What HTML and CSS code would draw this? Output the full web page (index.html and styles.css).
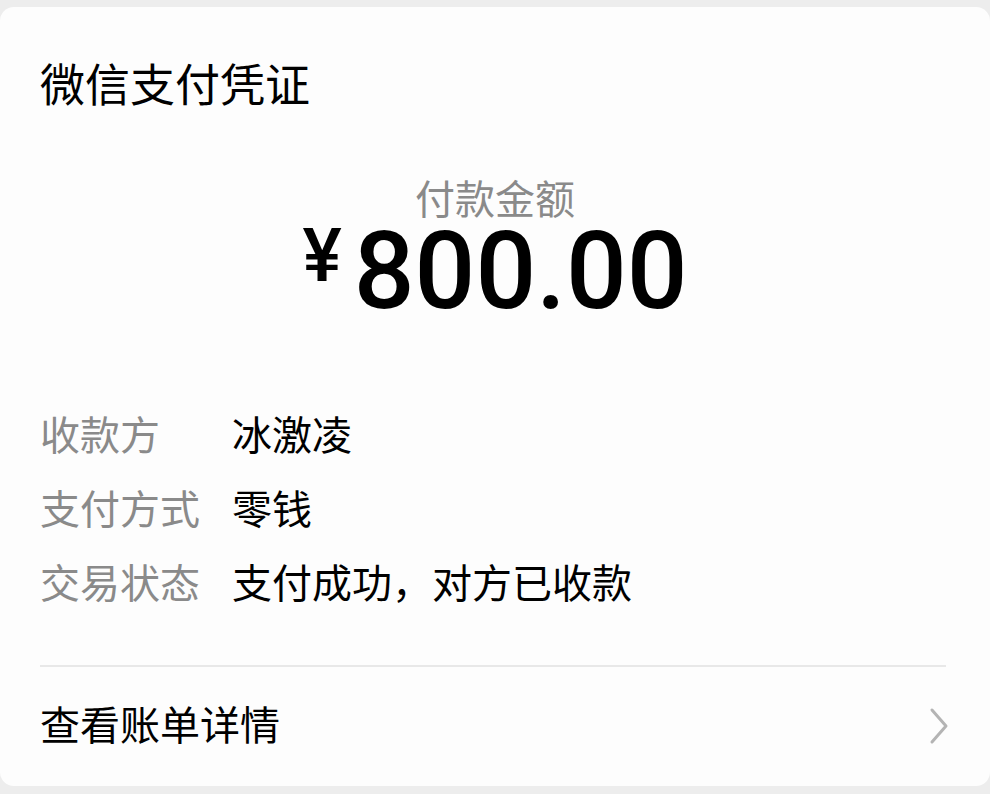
FILE: index.html
```html
<!DOCTYPE html>
<html>
<head>
<meta charset="utf-8" />
<title>微信支付凭证</title>
<link rel="stylesheet" href="styles.css">
</head>
<body>
<div class="card">
  <h1 class="title">微信支付凭证</h1>
  <div class="amount">
    <div class="amount-label">付款金额</div>
    <div class="amount-value"><span class="yen">¥</span>800.00</div>
  </div>
  <div class="rows">
    <div class="row"><label>收款方</label><span>冰激凌</span></div>
    <div class="row"><label>支付方式</label><span>零钱</span></div>
    <div class="row"><label>交易状态</label><span>支付成功，对方已收款</span></div>
  </div>
  <div class="footer">
    <span>查看账单详情</span>
    <svg class="chevron" width="22" height="38" viewBox="0 0 22 38">
      <path d="M4 3 L18 19 L4 35" fill="none" stroke="#b4b4b4" stroke-width="3" stroke-linecap="round" stroke-linejoin="round" />
    </svg>
  </div>
</div>
</body>
</html>
```

FILE: styles.css
```css
* {
  box-sizing: border-box;
}
html, body {
  margin: 0;
  height: 100%;
}
body {
  background-color: #ededed;
  font-family: 'Noto Sans CJK SC', 'Noto Sans', sans-serif;
  color: #000;
}
.card {
  margin: 7px 0 0 0;
  height: 779px;
  background-color: #fdfdfd;
  border-radius: 14px;
  padding: 53px 44px 0 40px;
}
.title {
  margin: 0;
  font-size: 45px;
  font-weight: 400;
  line-height: 45px;
}
.amount {
  margin-top: 72px;
  text-align: center;
}
.amount-label {
  font-size: 40px;
  line-height: 40px;
  color: #8a8a8a;
  padding-left: 4px;
}
.amount-value {
  font-family: Roboto, 'Noto Sans', sans-serif;
  font-weight: 500;
  font-size: 107px;
  line-height: 86px;
  margin-top: 12px;
  padding-left: 4px;
}
.yen {
  font-size: 74px;
  line-height: 0;
  vertical-align: 27px;
  margin-right: 12px;
}
.rows {
  margin-top: 98px;
  display: flex;
  flex-direction: column;
  gap: 34px;
}
.row {
  display: flex;
  font-size: 40px;
  line-height: 40px;
}
.row > label {
  width: 192px;
  color: #8a8a8a;
}
.footer {
  margin-top: 64px;
  border-top: 2px solid #e8e8e8;
  padding-top: 34px;
  display: flex;
  justify-content: space-between;
  align-items: center;
  font-size: 40px;
  line-height: 40px;
}
.chevron {
  margin: 6px -4px 0 0;
}
```
